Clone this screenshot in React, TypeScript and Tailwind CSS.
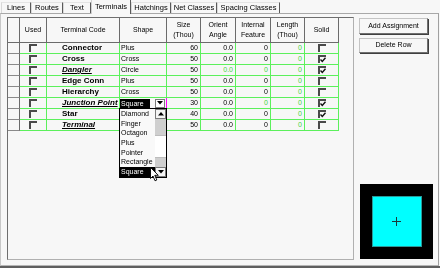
import React from 'react';

type Row = {
  code: string;
  shape: string;
  size: string;
  gOrient?: boolean;
  gInt?: boolean;
  special?: boolean;
  combo?: boolean;
  covered?: boolean;
  solid: boolean;
};

const rows: Row[] = [
  { code: 'Connector', shape: 'Plus', size: '60', solid: false },
  { code: 'Cross', shape: 'Cross', size: '50', solid: true },
  { code: 'Dangler', shape: 'Circle', size: '50', special: true, gOrient: true, gInt: true, solid: true },
  { code: 'Edge Conn', shape: 'Plus', size: '50', solid: false },
  { code: 'Hierarchy', shape: 'Cross', size: '50', solid: false },
  { code: 'Junction Point', shape: 'Square', size: '30', special: true, combo: true, gInt: true, solid: true },
  { code: 'Star', shape: 'Star', size: '40', covered: true, solid: true },
  { code: 'Terminal', shape: 'Square', size: '50', special: true, covered: true, solid: false },
];

const tabs = [
  { label: 'Lines', w: 'w-[30px]' },
  { label: 'Routes', w: 'w-[32px]' },
  { label: 'Text', w: 'w-[28px]' },
  { label: 'Terminals', w: 'w-[40px]', active: true },
  { label: 'Hatchings', w: 'w-[40px]' },
  { label: 'Net Classes', w: 'w-[46px]' },
  { label: 'Spacing Classes', w: 'w-[63px]' },
];

const listItems = ['Diamond', 'Finger', 'Octagon', 'Plus', 'Pointer', 'Rectangle', 'Square'];

function T({ children, className = '' }: { children: React.ReactNode; className?: string }) {
  return <span className={`inline-block grayscale ${className}`}>{children}</span>;
}

function CheckBox({ checked }: { checked: boolean }) {
  return (
    <div className="relative w-[8px] h-[8px] border-t-[2px] border-l-[2px] border-t-[#4a4a4a] border-l-[#4a4a4a] bg-transparent">
      {checked && (
        <svg className="absolute left-0 top-0" width="6" height="6" viewBox="0 0 6 6">
          <path d="M0.5 2.5 L2.3 4.5 L5.5 0.8" stroke="#111" strokeWidth="1.4" fill="none" />
        </svg>
      )}
    </div>
  );
}

const hdr = 'border-r border-b border-[#6b6b6b] flex items-center justify-center text-center leading-[10px] text-[7px] text-black';
const cell = 'border-r border-b border-[#5cf05c] flex items-center text-[7px] text-black';
const green = 'text-[#3fd43f]';

function Num({ v, g }: { v: string; g?: boolean }) {
  return (
    <div className={`${cell} justify-end pr-[2px]`}>
      {g ? <span className={green}>{v}</span> : <T>{v}</T>}
    </div>
  );
}

export default function App() {
  return (
    <div className="w-[440px] h-[268px] bg-[#f7f7f7] overflow-hidden flex flex-col font-['Liberation_Sans',Arial,sans-serif]">
      {/* tab strip */}
      <div className="h-[13px] flex items-end pl-[1px] relative z-10">
        {tabs.map((t) =>
          t.active ? (
            <div
              key={t.label}
              className={`${t.w} h-[14px] -mb-px bg-[#f7f7f7] border-l border-l-[#d0d0d0] border-r border-r-[#5a5a5a] flex items-center justify-center text-[7.5px] text-black`}
            >
              <T>{t.label}</T>
            </div>
          ) : (
            <div
              key={t.label}
              className={`${t.w} h-[11px] border-l border-l-[#d8d8d8] border-t border-t-[#e4e4e4] border-r border-r-[#5a5a5a] flex items-center justify-center text-[7.5px] text-black`}
            >
              <T>{t.label}</T>
            </div>
          )
        )}
      </div>

      {/* panel */}
      <div className="flex-1 border-t border-t-[#a8a8a8] border-l border-l-[#c8c8c8] border-r border-r-[#a0a0a0] border-b border-b-[#b5b5b5] w-[439px] pl-[6px] pt-[3px] flex">
        {/* grid box */}
        <div className="relative w-[347px] h-[243px] border-t border-l border-t-[#6e6e6e] border-l-[#6e6e6e] border-r border-b border-r-[#b0b0b0] border-b-[#b0b0b0]">
          <div className="grid grid-cols-[12px_27px_73px_47px_34px_35px_35px_34px_34px] grid-rows-[25px_repeat(8,11px)] w-[331px]">
            <div className={hdr}></div>
            <div className={hdr}><T>Used</T></div>
            <div className={hdr}><T>Terminal Code</T></div>
            <div className={hdr}><T>Shape</T></div>
            <div className={hdr}>
              <T>
                Size
                <br />
                (Thou)
              </T>
            </div>
            <div className={hdr}>
              <T>
                Orient
                <br />
                Angle
              </T>
            </div>
            <div className={hdr}>
              <T>
                Internal
                <br />
                Feature
              </T>
            </div>
            <div className={hdr}>
              <T>
                Length
                <br />
                (Thou)
              </T>
            </div>
            <div className={hdr}><T>Solid</T></div>

            {rows.map((r) => (
              <React.Fragment key={r.code}>
                <div className="border-r border-r-[#6b6b6b] border-b border-b-[#8a8a8a]"></div>
                <div className={`${cell} justify-center`}>
                  <CheckBox checked={false} />
                </div>
                <div className={`${cell} pl-[15px] text-[8px] font-bold whitespace-nowrap`}>
                  {r.special ? <T className="italic underline">{r.code}</T> : <T>{r.code}</T>}
                </div>
                {r.combo ? (
                  <div className="border-r border-r-[#ff00ff] border-b border-b-[#5cf05c] flex items-center text-[7px]">
                    <span className="bg-black text-white w-[30px] h-[9px] leading-[9px] pl-[1px] grayscale">Square</span>
                    <div className="ml-auto mr-[1px] w-[10px] h-[9px] border border-[#7a7a7a] bg-white flex items-center justify-center">
                      <svg width="6" height="4" viewBox="0 0 6 4">
                        <path d="M0 0 L6 0 L3 3.5 Z" fill="#000" />
                      </svg>
                    </div>
                  </div>
                ) : (
                  <div className={`${cell} pl-[1px]`}>{r.covered ? null : <T>{r.shape}</T>}</div>
                )}
                <Num v={r.size} />
                <Num v="0.0" g={r.gOrient} />
                <Num v="0" g={r.gInt} />
                <Num v="0" g />
                <div className={`${cell} justify-center`}>
                  <CheckBox checked={r.solid} />
                </div>
              </React.Fragment>
            ))}
          </div>

          {/* dropdown list */}
          <div className="absolute left-[111px] top-[90px] w-[48px] h-[70px] border border-black bg-[#f9f9f9] flex">
            <div className="flex-1 flex flex-col">
              {listItems.map((it) => (
                <div
                  key={it}
                  className={`h-[9.7px] leading-[9.7px] text-[7px] pl-[1px] whitespace-nowrap overflow-hidden grayscale ${
                    it === 'Square' ? 'bg-black text-white' : 'text-black'
                  }`}
                >
                  {it}
                </div>
              ))}
            </div>
            <div className="w-[11px] flex flex-col bg-[#cfcfcf]">
              <div className="h-[10px] bg-[#f4f4f4] border border-[#7a7a7a] flex items-center justify-center">
                <svg width="6" height="4" viewBox="0 0 6 4">
                  <path d="M0 3.5 L6 3.5 L3 0 Z" fill="#000" />
                </svg>
              </div>
              <div className="h-[16px]"></div>
              <div className="h-[23px] bg-white border-y border-[#bdbdbd]"></div>
              <div className="flex-1"></div>
              <div className="h-[10px] bg-[#f4f4f4] border border-[#7a7a7a] flex items-center justify-center">
                <svg width="6" height="4" viewBox="0 0 6 4">
                  <path d="M0 0 L6 0 L3 3.5 Z" fill="#000" />
                </svg>
              </div>
            </div>
          </div>

          {/* mouse cursor */}
          <svg className="absolute left-[142px] top-[149px]" width="10" height="15" viewBox="0 0 10 15">
            <path
              d="M0.5 0.5 L0.5 11.5 L3 9 L5 13.8 L6.8 13 L4.8 8.3 L8.3 8.3 Z"
              fill="#fff"
              stroke="#000"
              strokeWidth="0.9"
              strokeLinejoin="miter"
            />
          </svg>
        </div>

        {/* right column */}
        <div className="ml-[5px] h-[243px] flex flex-col">
          <button className="mt-[1px] w-[69px] h-[16px] bg-[#f7f7f7] border border-t-[#c4c4c4] border-l-[#c4c4c4] border-r-[#707070] border-b-[#707070] shadow-[1px_1px_0_#404040] text-[7px] text-black flex items-center justify-center">
            <T>Add Assignment</T>
          </button>
          <button className="mt-[4px] w-[69px] h-[15px] bg-[#f7f7f7] border border-t-[#c4c4c4] border-l-[#c4c4c4] border-r-[#707070] border-b-[#707070] shadow-[1px_1px_0_#404040] text-[7px] text-black flex items-center justify-center">
            <T>Delete Row</T>
          </button>
          <div className="mt-auto mb-[1px] ml-[1px] w-[73px] h-[75px] bg-black flex items-center justify-center">
            <div className="w-[50px] h-[51px] bg-[#00ffff] border border-[#2a9a9a] flex items-center justify-center">
              <svg width="9" height="9" viewBox="0 0 9 9">
                <path d="M4.5 0 V9 M0 4.5 H9" stroke="#1a3a3a" strokeWidth="1" />
              </svg>
            </div>
          </div>
        </div>
      </div>
      <div className="h-[2px] bg-[#5f5f5f]"></div>
    </div>
  );
}
